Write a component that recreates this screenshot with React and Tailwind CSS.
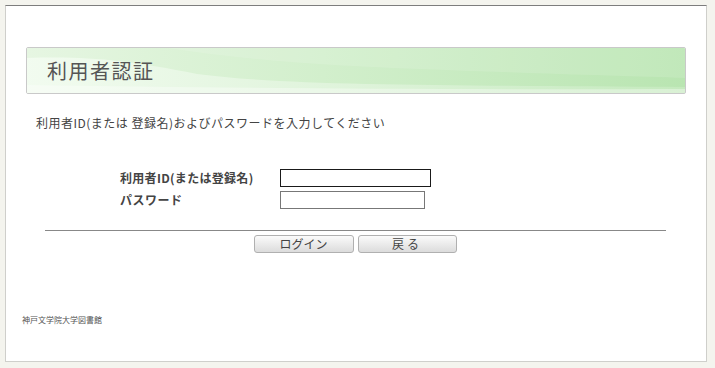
import React from "react";

const jp = { fontFamily: '"Noto Sans CJK JP", "Noto Sans", sans-serif' };

function HeaderWave() {
  return (
    <svg
      className="absolute inset-0 h-full w-full"
      viewBox="0 0 658 45"
      preserveAspectRatio="none"
    >
      <defs>
        <linearGradient id="base" x1="0" x2="1" y1="0" y2="0">
          <stop offset="0" stopColor="#e6f6e2" />
          <stop offset="0.45" stopColor="#d2efcc" />
          <stop offset="1" stopColor="#b9e5b1" />
        </linearGradient>
        <linearGradient id="band" x1="0" x2="1" y1="0" y2="0">
          <stop offset="0" stopColor="#f3fcf1" />
          <stop offset="0.5" stopColor="#e0f4dc" />
          <stop offset="1" stopColor="#c6eabf" />
        </linearGradient>
      </defs>
      <rect width="658" height="45" fill="url(#base)" />
      <path
        d="M0 10 C 60 8, 100 12, 170 26 C 260 38, 420 37, 658 39 L658 45 L0 45 Z"
        fill="url(#band)"
        opacity="0.9"
      />
      <path
        d="M0 0 L 140 0 C 220 12, 300 18, 420 22 C 520 26, 600 28, 658 30 L658 0 Z"
        fill="#ffffff"
        opacity="0.12"
      />
      <path
        d="M0 37 C 200 40, 420 42, 658 41 L658 45 L0 45 Z"
        fill="#ffffff"
        opacity="0.35"
      />
    </svg>
  );
}

export default function App() {
  return (
    <div className="min-h-[368px] w-[715px] bg-[#f4f4ee] pt-[5px] pl-[5px]" style={jp}>
      <div className="h-[357px] w-[702px] border border-t-[#7d7d7d] border-x-[#cfcfcb] border-b-[#cfcfcb] bg-white">
        {/* header */}
        <div className="ml-[20px] mt-[41px] relative h-[47px] w-[660px] overflow-hidden rounded-[2px] border border-[#c9c9c9]">
          <HeaderWave />
          <h1 className="relative pl-[20px] leading-[45px] text-[20px] tracking-[1.5px] text-[#555]">
            利用者認証
          </h1>
        </div>

        <p className="ml-[30px] mt-[22px] text-[12px] leading-[14px] tracking-[0.5px] text-[#444]">
          利用者ID(または 登録名)およびパスワードを入力してください
        </p>

        {/* form */}
        <div className="ml-[114px] mt-[39px] flex flex-col gap-[4px] text-[12px] text-[#444]">
          <div className="flex items-center">
            <span className="w-[160px] font-bold tracking-[0.3px]">利用者ID(または登録名)</span>
            <input className="h-[18px] w-[151px] border border-[#1a1a1a] bg-white outline-none" />
          </div>
          <div className="flex items-center">
            <span className="w-[160px] font-bold tracking-[0.5px]">パスワード</span>
            <input
              type="password"
              className="h-[18px] w-[145px] border border-[#777] bg-white outline-none"
            />
          </div>
        </div>

        <div className="ml-[39px] mt-[21px] h-px w-[621px] bg-[#888]" />

        <div className="mt-[4px] flex justify-center gap-[4px] pr-[2px] text-[12px] text-[#444]">
          <button className="h-[18px] w-[100px] rounded-[3px] border border-[#b0b0b0] bg-gradient-to-b from-[#fbfbfb] to-[#dcdcdc] leading-[16px]">
            ログイン
          </button>
          <button className="h-[18px] w-[99px] rounded-[3px] border border-[#b0b0b0] bg-gradient-to-b from-[#fbfbfb] to-[#dcdcdc] leading-[16px] tracking-[3px]">
            戻る
          </button>
        </div>

        <p className="ml-[16px] mt-[61px] text-[8px] leading-[12px] text-[#555]">
          神戸文学院大学図書館
        </p>
      </div>
    </div>
  );
}
